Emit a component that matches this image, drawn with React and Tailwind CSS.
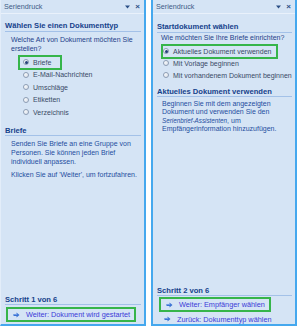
import React from 'react'

const font = { fontFamily: '"Liberation Sans", Arial, sans-serif' }

function Radio({ checked }) {
  return (
    <span className="w-[6px] h-[6px] shrink-0 rounded-full border border-[#8d9db4] bg-gradient-to-br from-white to-[#d9e0ea] flex items-center justify-center">
      {checked && <span className="w-[3px] h-[3px] rounded-full bg-[#24407a]" />}
    </span>
  )
}

function Arrow() {
  return (
    <svg width="7" height="6" viewBox="0 0 7 6" className="shrink-0">
      <path d="M0.5 2 H3.5 V0.5 L6.5 3 L3.5 5.5 V4 H0.5 Z" fill="#3a72d4" />
      <path d="M1 2.4 H4 V1.5" stroke="#9cc0f4" strokeWidth="0.6" fill="none" />
    </svg>
  )
}

function TitleBar() {
  return (
    <div className="h-[14px] flex items-center justify-between pl-[3px] pr-[4px] border-b border-[#e9f1fb]">
      <span className="text-[7.2px] leading-[9px] text-[#3d5c86]">Seriendruck</span>
      <div className="flex items-center gap-[5px]">
        <svg width="5" height="4" viewBox="0 0 5 4"><path d="M0 0.5 H5 L2.5 3.5 Z" fill="#2b4f86" /></svg>
        <span className="text-[8px] leading-[8px] font-bold text-[#2b4f86]">×</span>
      </div>
    </div>
  )
}

function Heading({ children, className = '' }) {
  return (
    <div className={'text-[7.6px] font-bold text-[#15428b] border-b border-[#a3c1e8] whitespace-nowrap ' + className}>
      {children}
    </div>
  )
}

function Option({ label, checked, boxed, rowH, padL, padR }) {
  return (
    <div className={'flex items-center ' + rowH}>
      <span
        className={
          'flex items-center gap-[4px] h-[15px] border-2 ' +
          padL + ' ' + padR + ' ' +
          (boxed ? 'border-[#36b54a]' : 'border-transparent')
        }
      >
        <Radio checked={checked} />
        <span className="text-[7px] leading-[9px] text-[#3a4a66] whitespace-nowrap">{label}</span>
      </span>
    </div>
  )
}

function Link({ label, boxed }) {
  return (
    <div
      className={
        'flex items-center gap-[6px] w-fit pl-[5px] pr-[4px] ' +
        (boxed ? 'h-[15px] border-2 border-[#36b54a]' : 'h-[9px] px-[7px]')
      }
    >
      <Arrow />
      <span className="text-[7.3px] leading-[9px] text-[#3b3bd8] whitespace-nowrap">{label}</span>
    </div>
  )
}

function LeftPanel() {
  return (
    <div className="w-[146px] h-[326px] shrink-0 bg-[#d5e4f5] border-r-2 border-b-2 border-l border-l-[#e3edf9] border-r-[#45a8ee] border-b-[#45a8ee] flex flex-col">
      <TitleBar />
      <div className="px-[4px] pr-[3px]">
        <Heading className="mt-[7px] leading-[10px]">Wählen Sie einen Dokumenttyp</Heading>
        <div className="pl-[6px] mt-[2.5px] text-[7px] leading-[9px] text-[#1f3f8a]">
          Welche Art von Dokument möchten Sie<br />erstellen?
        </div>
        <div className="ml-[13px] mt-[3.25px] flex flex-col">
          <Option label="Briefe" checked boxed rowH="h-[12.5px]" padL="pl-[3px]" padR="pr-[9px]" />
          <Option label="E-Mail-Nachrichten" rowH="h-[12.5px]" padL="pl-[3px]" padR="pr-[8px]" />
          <Option label="Umschläge" rowH="h-[12.5px]" padL="pl-[3px]" padR="pr-[8px]" />
          <Option label="Etiketten" rowH="h-[12.5px]" padL="pl-[3px]" padR="pr-[8px]" />
          <Option label="Verzeichnis" rowH="h-[12.5px]" padL="pl-[3px]" padR="pr-[8px]" />
        </div>
        <Heading className="mt-[7.25px] leading-[9px]">Briefe</Heading>
        <div className="pl-[6px] mt-[3px] text-[7px] leading-[9px] text-[#1f4ea0]">
          <p>Senden Sie Briefe an eine Gruppe von<br />Personen. Sie können jeden Brief<br />individuell anpassen.</p>
          <p className="mt-[4px]">Klicken Sie auf 'Weiter', um fortzufahren.</p>
        </div>
      </div>
      <div className="flex-1" />
      <div className="px-[4px] pr-[3px] pb-[2px]">
        <Heading className="leading-[9px]">Schritt 1 von 6</Heading>
        <div className="mt-[2.5px] ml-[1px]">
          <Link label="Weiter: Dokument wird gestartet" boxed />
        </div>
      </div>
    </div>
  )
}

function RightPanel() {
  return (
    <div className="w-[146px] h-[326px] shrink-0 ml-[5px] bg-[#d5e4f5] border-l-2 border-r-2 border-b-2 border-[#45a8ee] flex flex-col">
      <TitleBar />
      <div className="px-[4px] pr-[3px]">
        <Heading className="mt-[8px] leading-[10px]">Startdokument wählen</Heading>
        <div className="pl-[4px] text-[7px] leading-[9px] text-[#1f3f8a] whitespace-nowrap">
          Wie möchten Sie Ihre Briefe einrichten?
        </div>
        <div className="ml-[4px] mt-[3px] flex flex-col">
          <Option label="Aktuelles Dokument verwenden" checked boxed rowH="h-[12px]" padL="pl-[0px]" padR="pr-[5px]" />
          <Option label="Mit Vorlage beginnen" rowH="h-[12px]" padL="pl-[0px]" padR="pr-[5px]" />
          <Option label="Mit vorhandenem Dokument beginnen" rowH="h-[12px]" padL="pl-[0px]" padR="pr-[5px]" />
        </div>
        <Heading className="mt-[5.5px] leading-[9px]">Aktuelles Dokument verwenden</Heading>
        <div className="pl-[5px] mt-[3.25px] text-[7px] leading-[8.5px] text-[#1f4ea0]">
          Beginnen Sie mit dem angezeigten<br />Dokument und verwenden Sie den<br />
          <span className="italic text-[6.3px]">Serienbrief-Assistenten</span>, um<br />Empfängerinformation hinzuzufügen.
        </div>
      </div>
      <div className="flex-1" />
      <div className="px-[4px] pr-[3px] pb-[0.5px]">
        <Heading className="leading-[9px]">Schritt 2 von 6</Heading>
        <div className="mt-[1.5px] ml-[2px] flex flex-col">
          <Link label="Weiter: Empfänger wählen" boxed />
          <div className="mt-[2.5px]">
            <Link label="Zurück: Dokumenttyp wählen" />
          </div>
        </div>
      </div>
    </div>
  )
}

export default function App() {
  return (
    <div className="w-[300px] h-[328px] bg-white flex items-start overflow-hidden" style={font}>
      <LeftPanel />
      <RightPanel />
    </div>
  )
}
